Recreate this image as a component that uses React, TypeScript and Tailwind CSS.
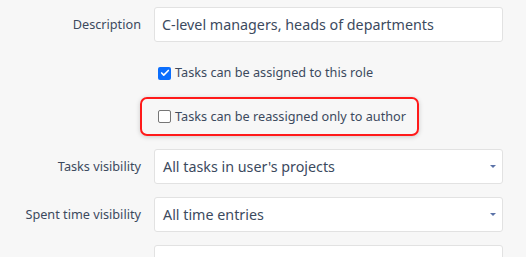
import { Check } from 'lucide-react';

const font = { fontFamily: '"Noto Sans", "Open Sans", sans-serif' };

function Row({ label, children }: { label: string; children: React.ReactNode }) {
  return (
    <div className="flex items-center">
      <label className="w-[141px] shrink-0 text-right text-[12.7px] text-[#3c4a5e]">{label}</label>
      <div className="ml-[13px] w-[349px]">{children}</div>
    </div>
  );
}

function Select({ value }: { value: string }) {
  return (
    <div className="h-[35px] bg-white border border-[#e2e2e2] rounded-[3px] flex items-center justify-between pl-[8px] pr-[6px]">
      <span className="text-[14.3px] text-[#3c4a5e]">{value}</span>
      <svg width="6" height="3" viewBox="0 0 6 3">
        <path d="M0 0h6L3 3z" fill="#5b72a8" />
      </svg>
    </div>
  );
}

export default function App() {
  return (
    <div className="min-h-[257px] h-[257px] overflow-hidden bg-[#f7f7f7] pt-[7px]" style={font}>
      <Row label="Description">
        <div className="h-[35px] bg-white border border-[#e2e2e2] rounded-[3px] flex items-center pl-[7px]">
          <span className="text-[14.3px] text-[#3c4a5e]">C-level managers, heads of departments</span>
        </div>
      </Row>

      <div className="ml-[158px] mt-[24px] flex items-center gap-[4px] h-[14px]">
        <span className="w-[13px] h-[13px] rounded-[2px] bg-[#0b6efd] flex items-center justify-center">
          <Check className="w-[10px] h-[10px] text-white" strokeWidth={4} />
        </span>
        <span className="text-[12.7px] text-[#3c4a5e]">Tasks can be assigned to this role</span>
      </div>

      <div className="ml-[140px] mt-[17px] w-[279px] h-[39px] border-2 border-[#ff1a1a] rounded-[7px] shadow-[0_1px_5px_rgba(0,0,0,0.18)] flex items-center gap-[4px] pl-[16px]">
        <span className="w-[13px] h-[13px] rounded-[2px] bg-white border border-[#767676]" />
        <span className="text-[12.7px] text-[#3c4a5e]">Tasks can be reassigned only to author</span>
      </div>

      <div className="mt-[13px] flex flex-col gap-[13px]">
        <Row label="Tasks visibility">
          <Select value="All tasks in user's projects" />
        </Row>
        <Row label="Spent time visibility">
          <Select value="All time entries" />
        </Row>
        <Row label="Users visibility">
          <Select value="All active users" />
        </Row>
      </div>
    </div>
  );
}
